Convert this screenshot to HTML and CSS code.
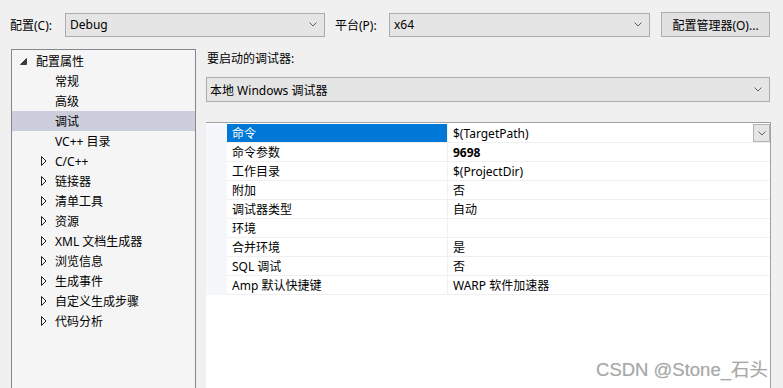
FILE: index.html
```html
<!DOCTYPE html>
<html lang="zh-CN">
<head>
    <meta charset="UTF-8">
    <title>调试 属性页</title>
    <link rel="stylesheet" href="styles.css">
</head>
<body>
    <div class="topbar">
        <span class="lbl lbl-cfg">配置(C):</span>
        <div class="combo combo-cfg">
            <span>Debug</span>
            <svg class="chev" width="8" height="5" viewBox="0 0 8 5"><polyline points="0.5,0.5 4,4 7.5,0.5" /></svg>
        </div>
        <span class="lbl lbl-plat">平台(P):</span>
        <div class="combo combo-plat">
            <span>x64</span>
            <svg class="chev" width="8" height="5" viewBox="0 0 8 5"><polyline points="0.5,0.5 4,4 7.5,0.5" /></svg>
        </div>
        <button class="btn">配置管理器(O)...</button>
    </div>

    <div class="main">
        <div class="tree">
            <div class="node root">
                <svg class="exp" width="7" height="7" viewBox="0 0 7 7"><polygon points="6.5,0.5 6.5,6.5 0.5,6.5" /></svg>
                配置属性
            </div>
            <div class="node leaf">常规</div>
            <div class="node leaf">高级</div>
            <div class="node leaf selected">调试</div>
            <div class="node leaf">VC++ 目录</div>
            <div class="node group"><svg class="col" width="6" height="10" viewBox="0 0 6 10"><polygon points="0.5,0.5 5,5 0.5,9.5" /></svg>C/C++</div>
            <div class="node group"><svg class="col" width="6" height="10" viewBox="0 0 6 10"><polygon points="0.5,0.5 5,5 0.5,9.5" /></svg>链接器</div>
            <div class="node group"><svg class="col" width="6" height="10" viewBox="0 0 6 10"><polygon points="0.5,0.5 5,5 0.5,9.5" /></svg>清单工具</div>
            <div class="node group"><svg class="col" width="6" height="10" viewBox="0 0 6 10"><polygon points="0.5,0.5 5,5 0.5,9.5" /></svg>资源</div>
            <div class="node group"><svg class="col" width="6" height="10" viewBox="0 0 6 10"><polygon points="0.5,0.5 5,5 0.5,9.5" /></svg>XML 文档生成器</div>
            <div class="node group"><svg class="col" width="6" height="10" viewBox="0 0 6 10"><polygon points="0.5,0.5 5,5 0.5,9.5" /></svg>浏览信息</div>
            <div class="node group"><svg class="col" width="6" height="10" viewBox="0 0 6 10"><polygon points="0.5,0.5 5,5 0.5,9.5" /></svg>生成事件</div>
            <div class="node group"><svg class="col" width="6" height="10" viewBox="0 0 6 10"><polygon points="0.5,0.5 5,5 0.5,9.5" /></svg>自定义生成步骤</div>
            <div class="node group"><svg class="col" width="6" height="10" viewBox="0 0 6 10"><polygon points="0.5,0.5 5,5 0.5,9.5" /></svg>代码分析</div>
        </div>

        <div class="content">
            <div class="caption">要启动的调试器:</div>
            <div class="combo combo-dbg">
                <span>本地 Windows 调试器</span>
                <svg class="chev" width="8" height="5" viewBox="0 0 8 5"><polyline points="0.5,0.5 4,4 7.5,0.5" /></svg>
            </div>
            <div class="grid">
                <div class="row selected">
                    <div class="gut"></div>
                    <div class="name">命令</div>
                    <div class="val">
                        <span>$(TargetPath)</span>
                        <span class="drop"><svg width="8" height="5" viewBox="0 0 8 5"><polyline points="0.5,0.5 4,4 7.5,0.5" /></svg></span>
                    </div>
                </div>
                <div class="row"><div class="gut"></div><div class="name">命令参数</div><div class="val bold">9698</div></div>
                <div class="row"><div class="gut"></div><div class="name">工作目录</div><div class="val">$(ProjectDir)</div></div>
                <div class="row"><div class="gut"></div><div class="name">附加</div><div class="val">否</div></div>
                <div class="row"><div class="gut"></div><div class="name">调试器类型</div><div class="val">自动</div></div>
                <div class="row"><div class="gut"></div><div class="name">环境</div><div class="val"></div></div>
                <div class="row"><div class="gut"></div><div class="name">合并环境</div><div class="val">是</div></div>
                <div class="row"><div class="gut"></div><div class="name">SQL 调试</div><div class="val">否</div></div>
                <div class="row"><div class="gut"></div><div class="name">Amp 默认快捷键</div><div class="val">WARP 软件加速器</div></div>
            </div>
        </div>
    </div>

    <div class="watermark">CSDN @Stone_石头</div>
</body>
</html>
```

FILE: styles.css
```css
html, body {
    margin: 0;
    height: 388px;
    overflow: hidden;
}
body {
    position: relative;
    background-color: #f0f0f0;
    color: #000;
    font-family: "Noto Sans", "Noto Sans CJK SC", sans-serif;
    font-size: 12px;
}
.topbar {
    display: flex;
    align-items: center;
    height: 25px;
    padding: 12px 0 0 10px;
}
.lbl {
    white-space: nowrap;
}
.lbl-cfg {
    width: 55px;
}
.lbl-plat {
    width: 54px;
    margin-left: 10px;
}
.combo {
    box-sizing: border-box;
    display: flex;
    align-items: center;
    justify-content: space-between;
    height: 24px;
    padding: 0 7px 0 4px;
    background-color: #e5e5e5;
    border: 1px solid #acacac;
}
.combo-cfg {
    width: 260px;
}
.combo-plat {
    width: 261px;
}
.chev {
    flex: none;
}
.chev polyline,
.drop polyline {
    fill: none;
    stroke: #606060;
    stroke-width: 1;
}
.btn {
    box-sizing: border-box;
    width: 109px;
    height: 25px;
    margin-left: 11px;
    padding: 0;
    background-color: #e1e1e1;
    border: 1px solid #adadad;
    font-family: inherit;
    font-size: 12px;
    color: #000;
}
.main {
    display: flex;
    height: 339px;
    margin-top: 12px;
}
.tree {
    box-sizing: border-box;
    width: 185px;
    height: 339px;
    margin-left: 11px;
    padding-top: 1px;
    background-color: #f5f5f5;
    border: 1px solid #828790;
    border-bottom: none;
}
.node {
    display: flex;
    align-items: center;
    height: 20px;
    white-space: nowrap;
}
.root {
    padding-left: 8px;
}
.root .exp {
    margin-right: 9px;
}
.exp polygon {
    fill: #3c3c3c;
    stroke: #3c3c3c;
    stroke-width: 1;
}
.leaf {
    padding-left: 43px;
}
.group {
    padding-left: 29px;
}
.group .col {
    margin-right: 8px;
}
.col polygon {
    fill: none;
    stroke: #1e1e1e;
    stroke-width: 1;
}
.node.selected {
    background-color: #cccedb;
}
.content {
    display: flex;
    flex-direction: column;
    width: 565px;
    height: 339px;
    margin-left: 10px;
}
.caption {
    height: 20px;
    line-height: 20px;
    padding-left: 1px;
}
.combo-dbg {
    width: 564px;
    height: 25px;
    margin-top: 8px;
    padding-left: 3px;
}
.grid {
    flex: 1;
    margin-top: 20px;
    padding-top: 1px;
    background-color: #fff;
    border-top: 1px solid #a0a0a0;
    border-right: 1px solid #a0a0a0;
}
.row {
    display: flex;
    height: 19px;
}
.gut {
    width: 21px;
    background-color: #f5f7fb;
}
.name,
.val {
    box-sizing: border-box;
    display: flex;
    align-items: center;
    height: 19px;
    padding-left: 5px;
    border-bottom: 1px solid #f0f0f0;
    white-space: nowrap;
}
.name {
    width: 221px;
    border-right: 1px solid #f0f0f0;
}
.val {
    flex: 1;
    justify-content: space-between;
    padding-right: 0;
}
.bold {
    font-weight: bold;
}
.row.selected .name {
    background-color: #0078d7;
    color: #fff;
}
.drop {
    box-sizing: border-box;
    display: flex;
    align-items: center;
    justify-content: center;
    width: 17px;
    height: 18px;
    background-color: #e5e5e5;
    border: 1px solid #b4b4b4;
}
.watermark {
    position: absolute;
    right: 15px;
    bottom: 8px;
    line-height: 20px;
    font-family: "Liberation Sans", "Noto Sans CJK SC", sans-serif;
    font-size: 18.5px;
    color: #a8a8a8;
    text-shadow: 0 0 1px #d8d8d8;
}
```
